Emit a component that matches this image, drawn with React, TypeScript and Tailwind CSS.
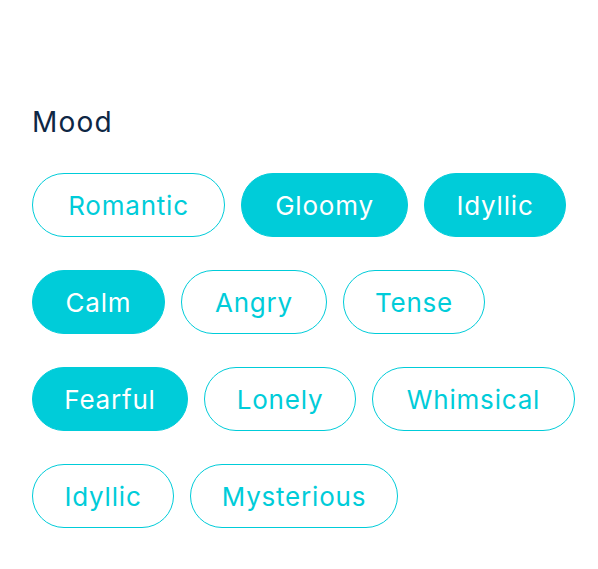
import React from "react";

const rows: { label: string; w: number; on: boolean }[][] = [
  [
    { label: "Romantic", w: 193, on: false },
    { label: "Gloomy", w: 167, on: true },
    { label: "Idyllic", w: 142, on: true },
  ],
  [
    { label: "Calm", w: 133, on: true },
    { label: "Angry", w: 146, on: false },
    { label: "Tense", w: 142, on: false },
  ],
  [
    { label: "Fearful", w: 156, on: true },
    { label: "Lonely", w: 152, on: false },
    { label: "Whimsical", w: 203, on: false },
  ],
  [
    { label: "Idyllic", w: 142, on: false },
    { label: "Mysterious", w: 208, on: false },
  ],
];

export default function App() {
  return (
    <div
      className="w-[598px] h-[569px] bg-white pl-[32px] pt-[102px]"
      style={{ fontFamily: "Inter, 'Noto Sans', sans-serif" }}
    >
      <h2 className="text-[28px] leading-[40px] tracking-[1.2px] text-[#0e2744] font-normal">Mood</h2>
      <div className="mt-[31px] flex flex-col gap-[33px]">
        {rows.map((row, i) => (
          <div key={i} className="flex gap-[16px]">
            {row.map((c, j) => (
              <div
                key={j}
                style={{ width: c.w }}
                className={
                  c.on
                    ? "h-[64px] rounded-full bg-[#00ccd9] border-[1.5px] border-[#00ccd9] flex items-center justify-center text-white text-[26px] tracking-[0.8px]"
                    : "h-[64px] rounded-full bg-white border-[1.5px] border-[#00ccd9] flex items-center justify-center text-[#00ccd9] text-[26px] tracking-[0.8px]"
                }
              >
                {c.label}
              </div>
            ))}
          </div>
        ))}
      </div>
    </div>
  );
}
